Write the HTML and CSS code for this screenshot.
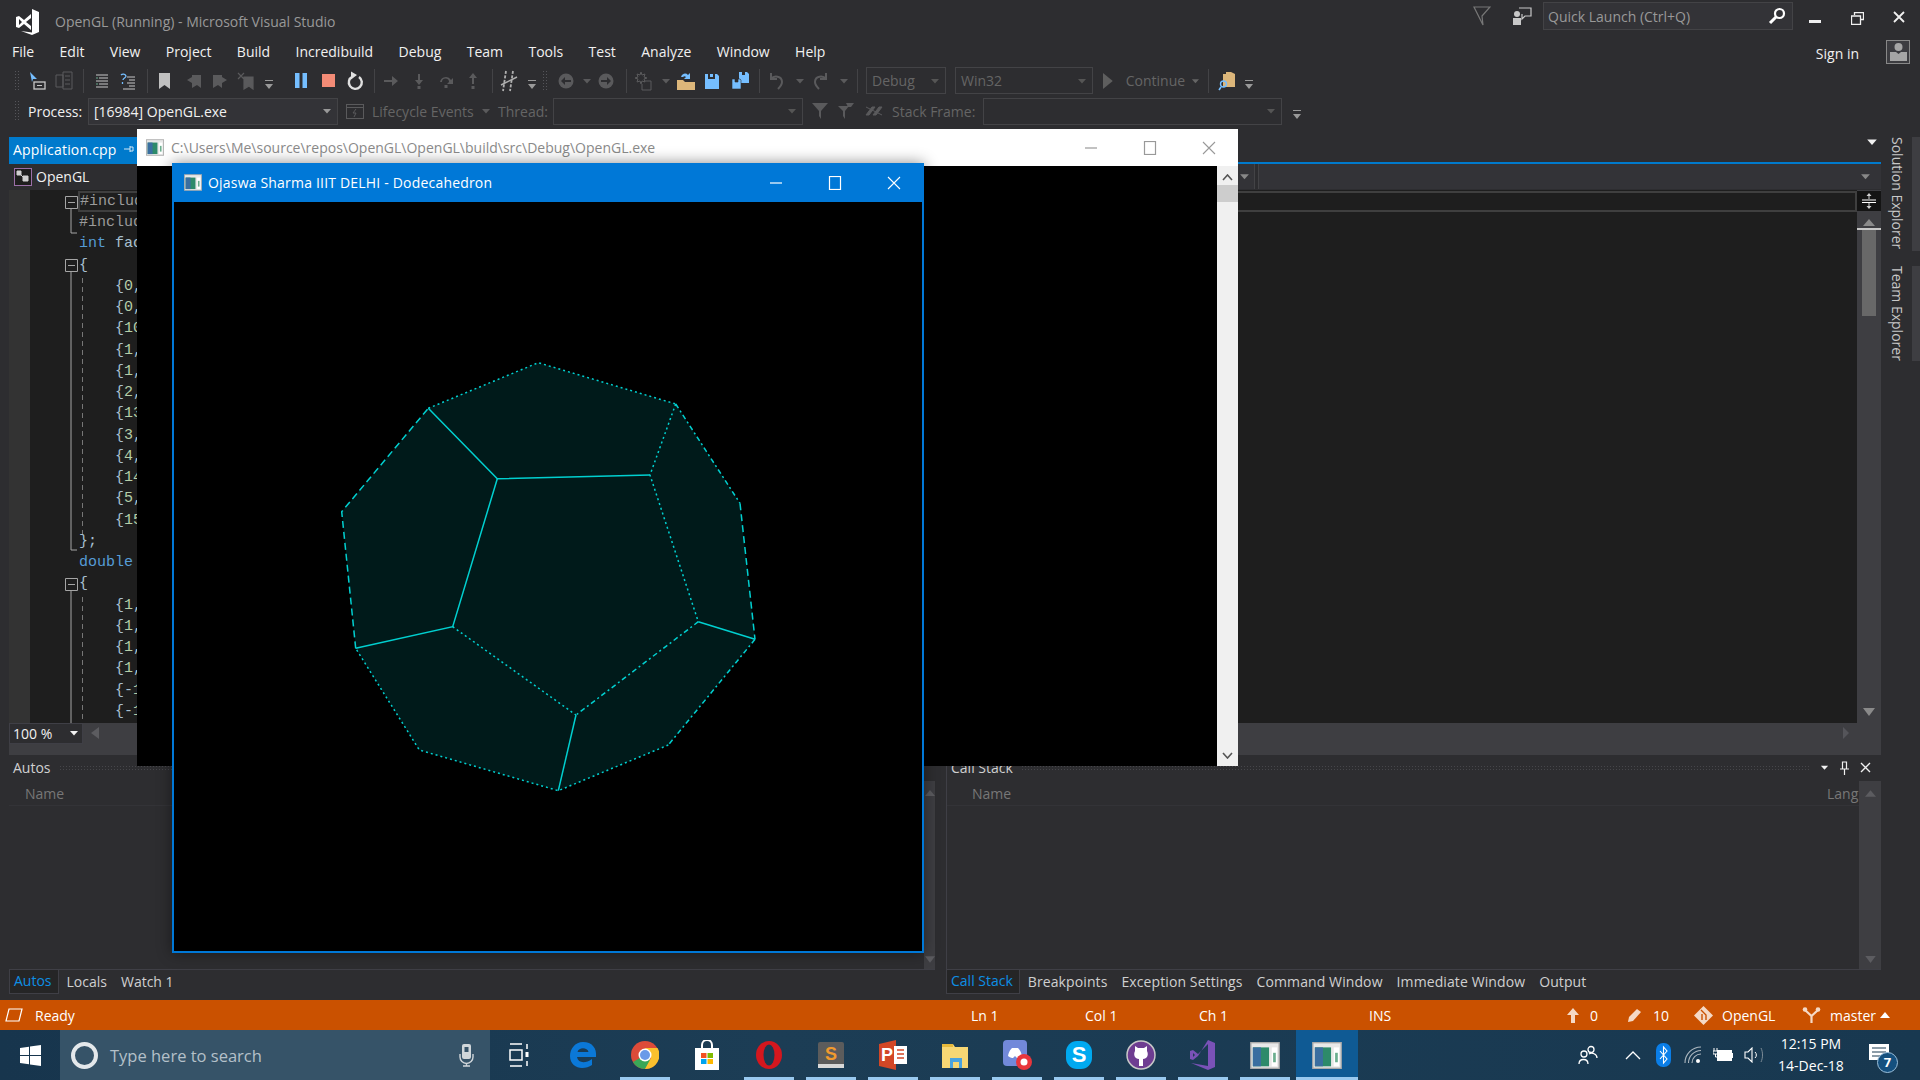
FILE: index.html
```html
<!DOCTYPE html>
<html lang="en">
<head>
    <meta charset="UTF-8">
    <title>OpenGL (Running) - Microsoft Visual Studio</title>
    <link rel="stylesheet" href="styles.css">
</head>
<body>
    <svg class="defs" width="0" height="0">
        <symbol id="i-caret" viewBox="0 0 10 10"><path d="M1 3h8L5 7.5z" fill="currentColor"/></symbol>
        <symbol id="i-over" viewBox="0 0 12 14"><path d="M2 3h8v1H2zM2 7h8l-4 5z" fill="currentColor"/></symbol>
        <symbol id="i-bm" viewBox="0 0 18 18"><path d="M4 1h11v16l-5.500-4L4 17z" fill="currentColor"/></symbol>
        <symbol id="i-step" viewBox="0 0 18 18"><path d="M2 8h8V4l6 5-6 5v-4H2z" fill="currentColor"/></symbol>
        <symbol id="i-down" viewBox="0 0 18 18"><path d="M8 2h2v6h3l-4 5-4-5h3zM7.500 14h3v3h-3z" fill="currentColor"/></symbol>
        <symbol id="i-up" viewBox="0 0 18 18"><path d="M9 1l4 5h-3v6H8V6H5zM7.500 14h3v3h-3z" fill="currentColor"/></symbol>
        <symbol id="i-over-step" viewBox="0 0 18 18"><path d="M3 10a6 6 0 0 1 11-2l2-2v6h-6l2-2a3.500 3.500 0 0 0-7 0zM7.500 13h3v3h-3z" fill="currentColor"/></symbol>
        <symbol id="i-nav" viewBox="0 0 18 18"><circle cx="9" cy="9" r="7.500" fill="currentColor"/><path d="M4 9l4-4v3h6v2H8v3z" fill="#2d2d30"/></symbol>
        <symbol id="i-nav-f" viewBox="0 0 18 18"><circle cx="9" cy="9" r="7.500" fill="currentColor"/><path d="M14 9l-4-4v3H4v2h6v3z" fill="#2d2d30"/></symbol>
        <symbol id="i-appwin" viewBox="0 0 22 20"><rect x=".5" y=".5" width="21" height="19" fill="#e8e8e8" stroke="#aaa"/><rect x="2" y="4" width="12" height="14" fill="#2d8a6a"/><rect x="2" y="4" width="6" height="14" fill="#3a6ea0"/><rect x="16" y="4" width="4" height="14" fill="#fff"/><rect x="17" y="8" width="2" height="7" fill="#6cae8f"/></symbol>
        <symbol id="i-min" viewBox="0 0 14 14"><path d="M1 7h12" stroke="currentColor" stroke-width="1.200"/></symbol>
        <symbol id="i-max" viewBox="0 0 14 14"><rect x="1.500" y=".5" width="11" height="13" fill="none" stroke="currentColor" stroke-width="1.200"/></symbol>
        <symbol id="i-close" viewBox="0 0 14 14"><path d="M1 1l12 12M13 1L1 13" stroke="currentColor" stroke-width="1.100"/></symbol>
    </svg>

    <header class="titlebar">
        <svg class="vs-logo" width="28" height="30" viewBox="0 0 28 30"><path d="M19 2l7 3v20l-7 3-11-4 11 1.500zM3 10l3-1 5 4 7-6v16l-7-6-5 4-3-1zM6 12v6l3-3zM18 11l-5 4 5 4z" fill="#fff" fill-rule="evenodd"/></svg>
        <span class="app-title">OpenGL (Running) - Microsoft Visual Studio</span>
        <div class="title-right">
            <svg class="ic-filter" width="18" height="20" viewBox="0 0 18 20"><path d="M1 1h16L9 10l1 9z" fill="none" stroke="#777" stroke-width="1.200"/></svg>
            <svg class="ic-feedback" width="20" height="20" viewBox="0 0 20 20"><circle cx="5" cy="8" r="3" fill="#c8c8c8"/><path d="M1 12h8v7H1z" fill="#c8c8c8"/><path d="M7 2h12v8h-6l-3 3V8" fill="none" stroke="#c8c8c8" stroke-width="1.200"/></svg>
            <div class="quick-launch">
                <span>Quick Launch (Ctrl+Q)</span>
                <svg width="18" height="18" viewBox="0 0 18 18"><circle cx="11.500" cy="6.500" r="4.500" fill="none" stroke="#fff" stroke-width="2.200"/><path d="M8 10l-6 6" stroke="#fff" stroke-width="3"/></svg>
            </div>
            <svg class="ctl-min" width="12" height="4" viewBox="0 0 12 4"><rect width="12" height="3" fill="#f0f0f0"/></svg>
            <svg class="ctl-restore" width="13" height="13" viewBox="0 0 13 13"><path d="M3.500 3V.5h9v7H10M.5 4h9v8.500h-9z" fill="none" stroke="#f0f0f0" stroke-width="1.300"/></svg>
            <svg class="ctl-close" width="12" height="12" viewBox="0 0 12 12"><path d="M1 1l10 10M11 1L1 11" stroke="#f0f0f0" stroke-width="1.800"/></svg>
        </div>
    </header>

    <nav class="menubar">
        <span>File</span><span>Edit</span><span>View</span><span>Project</span><span>Build</span><span>Incredibuild</span><span>Debug</span><span>Team</span><span>Tools</span><span>Test</span><span>Analyze</span><span>Window</span><span>Help</span>
        <div class="account">
            <span class="sign-in">Sign in</span>
            <div class="avatar"><svg width="19" height="19" viewBox="0 0 19 19"><circle cx="9.500" cy="5" r="4" fill="#a5a5a5"/><path d="M1 10h6l2.500 2 2.500-2h6v9H1z" fill="#a5a5a5"/></svg></div>
        </div>
    </nav>

    <div class="toolbar tb-main">
        <i class="grip"></i>
        <span class="tb ml5 on"><svg width="18" height="20" viewBox="0 0 18 20"><path d="M1 1l7 7H4l-1 3z" fill="#75beff"/><rect x="5" y="11" width="11" height="7" fill="none" stroke="#c8c8c8" stroke-width="1.300"/><path d="M8 14.500h5" stroke="#c8c8c8"/></svg></span>
        <span class="tb off"><svg width="18" height="20" viewBox="0 0 18 20"><path d="M1 4h7v12H1zM8 1h9v17H8z" fill="none" stroke="currentColor"/><path d="M10 5h5M10 9h5M10 13h5" stroke="currentColor"/></svg></span>
        <i class="sep ml6"></i>
        <span class="tb ml5 on"><svg width="16" height="14" viewBox="0 0 16 14"><path d="M2 1h12M5 4h9M2 7h12M5 10h9M2 13h12" stroke="#c8c8c8"/><path d="M2 4h2M2 10h2" stroke="#6cae8f"/></svg></span>
        <span class="tb on"><svg width="18" height="18" viewBox="0 0 18 18"><path d="M2 3a3 3 0 0 1 5 1c0 2-3 2-3 4M3.500 10v2" fill="none" stroke="#75beff" stroke-width="1.300"/><path d="M8 5h8M10 8h6M8 11h8M10 14h6M4 17h12" stroke="#c8c8c8"/></svg></span>
        <i class="sep ml6"></i>
        <span class="tb ml3 lit"><svg width="18" height="18"><use href="#i-bm"/></svg></span>
        <span class="tb ml4 off"><svg width="18" height="18" viewBox="0 0 18 18"><path d="M7 3h9v13l-4-3-5 3zM7 5L2 8l5 3" fill="currentColor"/></svg></span>
        <span class="tb off"><svg width="18" height="18" viewBox="0 0 18 18"><path d="M2 3h9v13l-4-3-5 3zM11 5l5 3-5 3" fill="currentColor"/></svg></span>
        <span class="tb off"><svg width="18" height="18" viewBox="0 0 18 18"><path d="M7 5h9v12l-4-3-5 3zM1 1l6 6M7 1L1 7" fill="currentColor" stroke="currentColor" stroke-width="1.200"/></svg></span>
        <span class="over ml4"><svg width="12" height="14"><use href="#i-over"/></svg></span>
        <span class="tb ml13"><svg width="12" height="15" viewBox="0 0 12 15"><path d="M0 0h4.500v15H0zM7.500 0H12v15H7.500z" fill="#75beff"/></svg></span>
        <span class="tb ml1"><svg width="13" height="13" viewBox="0 0 13 13"><rect width="13" height="13" fill="#f38b76"/></svg></span>
        <span class="tb ml1 lit"><svg width="18" height="20" viewBox="0 0 18 20"><path d="M6.500 5.500A6.500 6.500 0 1 0 13 6" fill="none" stroke="#e0e0e0" stroke-width="2.400"/><path d="M5 .5v8l6-4.500z" fill="#e0e0e0"/></svg></span>
        <i class="sep ml6"></i>
        <span class="tb ml3 off"><svg width="18" height="18"><use href="#i-step"/></svg></span>
        <span class="tb ml2 off"><svg width="18" height="18"><use href="#i-down"/></svg></span>
        <span class="tb ml1 off"><svg width="18" height="18"><use href="#i-over-step"/></svg></span>
        <span class="tb ml1 off"><svg width="18" height="18"><use href="#i-up"/></svg></span>
        <i class="sep ml6"></i>
        <span class="tb ml3"><svg width="18" height="22" viewBox="0 0 18 22"><path d="M6 1L3 21M13 1l-3 20" fill="none" stroke="#b0b0b0" stroke-width="1.800" stroke-dasharray="3 1.500"/><path d="M1 15L17 7" stroke="#b0b0b0" stroke-width="1.500"/></svg></span>
        <span class="over ml4"><svg width="12" height="14"><use href="#i-over"/></svg></span>
        <i class="grip ml4"></i>
        <span class="tb ml5 off"><svg width="18" height="18"><use href="#i-nav"/></svg></span>
        <span class="caret ml2 off"><svg width="10" height="10"><use href="#i-caret"/></svg></span>
        <span class="tb off"><svg width="18" height="18"><use href="#i-nav-f"/></svg></span>
        <i class="sep ml7"></i>
        <span class="tb ml4 off"><svg width="18" height="20" viewBox="0 0 18 20"><path d="M6 1l1 3 3-1-1 3 3 1-3 1 1 3-3-1-1 3-1-3-3 1 1-3-3-1 3-1-1-3 3 1z" fill="none" stroke="currentColor"/><path d="M9 10h7v9H7v-6" fill="none" stroke="currentColor"/></svg></span>
        <span class="caret ml3 off"><svg width="10" height="10"><use href="#i-caret"/></svg></span>
        <span class="tb ml1"><svg width="20" height="20" viewBox="0 0 20 20"><path d="M1 9h6l2 2h10v8H1z" fill="#dcb67a"/><path d="M5 6a4 4 0 0 1 7-2l2-2v6H8l2-2a2 2 0 0 0-3 0z" fill="#75beff"/></svg></span>
        <span class="tb"><svg width="16" height="18" viewBox="0 0 16 18"><path d="M1 2h3v5h7V2h2l2 2v13H1z" fill="#75beff"/><rect x="6" y="2" width="3" height="3" fill="#75beff"/></svg></span>
        <span class="tb ml2"><svg width="19" height="19" viewBox="0 0 19 19"><path d="M8 1h3v3h3V1h2l2 2v9H8z" fill="#75beff"/><path d="M1 8h3v3h3V8h2l1 1v9H1z" fill="#75beff" stroke="#2d2d30" stroke-width=".6"/></svg></span>
        <i class="sep ml6"></i>
        <span class="tb ml4 off"><svg width="16" height="18" viewBox="0 0 16 18"><path d="M2 1v6h6M2 7c3-4 11-3 11 3 0 3-2 5-4 7" fill="none" stroke="currentColor" stroke-width="2"/></svg></span>
        <span class="caret ml4 off"><svg width="10" height="10"><use href="#i-caret"/></svg></span>
        <span class="tb ml1 off"><svg width="16" height="18" viewBox="0 0 16 18"><path d="M14 1v6H8M14 7C11 3 3 4 3 10c0 3 2 5 4 7" fill="none" stroke="currentColor" stroke-width="2"/></svg></span>
        <span class="caret ml5 off"><svg width="10" height="10"><use href="#i-caret"/></svg></span>
        <i class="sep ml7"></i>
        <div class="combo dim w-debug ml8"><span>Debug</span><svg width="10" height="10"><use href="#i-caret"/></svg></div>
        <div class="combo dim w-win ml9"><span>Win32</span><svg width="10" height="10"><use href="#i-caret"/></svg></div>
        <div class="continue ml4">
            <svg width="11" height="18" viewBox="0 0 11 18"><path d="M0 0l11 9-11 9z" fill="#5e5e5e"/></svg>
            <span>Continue</span>
            <svg width="10" height="10"><use href="#i-caret"/></svg>
        </div>
        <i class="sep ml8"></i>
        <span class="tb ml5"><svg width="18" height="20" viewBox="0 0 18 20"><path d="M5 3h3V1h5l4 2v13H5z" fill="#dcb67a"/><circle cx="5.500" cy="13" r="3" fill="none" stroke="#75beff" stroke-width="1.400"/><path d="M3 16l-2 3" stroke="#75beff" stroke-width="1.600"/></svg></span>
        <span class="over ml3"><svg width="12" height="14"><use href="#i-over"/></svg></span>
    </div>

    <div class="toolbar tb-debug">
        <i class="grip"></i>
        <span class="tb-label w-process ml8">Process:</span>
        <div class="combo w-procbox"><span>[16984] OpenGL.exe</span><svg width="10" height="10"><use href="#i-caret"/></svg></div>
        <span class="tb-18 ml8 off"><svg width="18" height="18" viewBox="0 0 18 18"><rect x=".5" y="2.500" width="17" height="14" fill="none" stroke="currentColor"/><path d="M.5 5.500h17M10 7L7 11h3l-2 4" fill="none" stroke="currentColor"/></svg></span>
        <span class="tb-label dim-text w-life ml8">Lifecycle Events</span>
        <span class="caret ml4 off"><svg width="10" height="10"><use href="#i-caret"/></svg></span>
        <span class="tb-label dim-text w-thread ml6">Thread:</span>
        <div class="combo empty w-thbox"><svg width="10" height="10"><use href="#i-caret"/></svg></div>
        <span class="tb-18 ml8 off"><svg width="18" height="18" viewBox="0 0 18 18"><path d="M1 1h16L10 9v8L8 14V9z" fill="currentColor"/></svg></span>
        <span class="tb-18 ml8 off"><svg width="18" height="18" viewBox="0 0 18 18"><path d="M1 4h11L8 9v8L6 14V9zM9 1h8l-3 4h-3z" fill="currentColor"/></svg></span>
        <span class="tb-18 ml10 off"><svg width="18" height="18" viewBox="0 0 18 18"><path d="M1 13l6-8h3l-6 8zM8 13l6-8h3l-6 8zM1 5l16 8" fill="currentColor" stroke="currentColor"/></svg></span>
        <span class="tb-label dim-text w-stack ml9">Stack Frame:</span>
        <div class="combo empty w-stbox"><svg width="10" height="10"><use href="#i-caret"/></svg></div>
        <span class="over ml9"><svg width="12" height="14"><use href="#i-over"/></svg></span>
    </div>

    <main class="workspace">
        <div class="center">
            <div class="tabwell">
                <div class="doc-tab"><span>Application.cpp</span><svg width="10" height="10" viewBox="0 0 10 10"><path d="M0 5h6M6 2v6M6 3h3v4H6" fill="none" stroke="#cfe6f5"/></svg></div>
                <svg class="well-caret" width="12" height="12"><use href="#i-caret"/></svg>
            </div>
            <div class="navbar">
                <div class="nav-left">
                    <svg width="18" height="18" viewBox="0 0 18 18"><rect x=".5" y=".5" width="17" height="17" fill="#1e1e1e" stroke="#9b6fa8"/><path d="M3 3h4v4H3zM9 8h5v5H9zM6 6l4 4" fill="#d0d0d0" stroke="#d0d0d0"/></svg>
                    <span>OpenGL</span>
                </div>
                <div class="nav-mid"><svg width="11" height="11"><use href="#i-caret"/></svg></div>
                <div class="nav-last"><svg width="11" height="11"><use href="#i-caret"/></svg></div>
            </div>
            <div class="editor">
                <div class="gutter"></div>
                <div class="code">
                    <svg class="outline" width="60" height="533" viewBox="0 189 60 533">
                        <g fill="none" stroke="#a5a5a5">
                            <path d="M41 208v24h6M41 270v279h6M41 589v133"/>
                            <path d="M35.500 195.500h12v12h-12zM35.500 258.500h12v12h-12zM35.500 577.500h12v12h-12z" fill="#1e1e1e"/>
                            <path d="M38 201.500h7M38 264.500h7M38 583.500h7"/>
                            <path d="M52.500 277v258M52.500 596v126" stroke="#777" stroke-dasharray="5 4"/>
                        </g>
                    </svg>
                    <div class="line current"><span class="pp">#include</span></div>
                    <div class="line"><span class="pp">#include</span></div>
                    <div class="line"><span class="kw">int</span> fac</div>
                    <div class="line">{</div>
                    <div class="line in">{<span class="num">0</span>,</div>
                    <div class="line in">{<span class="num">0</span>,</div>
                    <div class="line in">{<span class="num">10</span></div>
                    <div class="line in">{<span class="num">1</span>,</div>
                    <div class="line in">{<span class="num">1</span>,</div>
                    <div class="line in">{<span class="num">2</span>,</div>
                    <div class="line in">{<span class="num">13</span></div>
                    <div class="line in">{<span class="num">3</span>,</div>
                    <div class="line in">{<span class="num">4</span>,</div>
                    <div class="line in">{<span class="num">14</span></div>
                    <div class="line in">{<span class="num">5</span>,</div>
                    <div class="line in">{<span class="num">15</span></div>
                    <div class="line">};</div>
                    <div class="line"><span class="kw">double</span></div>
                    <div class="line">{</div>
                    <div class="line in">{<span class="num">1</span>,</div>
                    <div class="line in">{<span class="num">1</span>,</div>
                    <div class="line in">{<span class="num">1</span>,</div>
                    <div class="line in">{<span class="num">1</span>,</div>
                    <div class="line in">{-<span class="num">1</span></div>
                    <div class="line in">{-<span class="num">1</span></div>
                </div>
                <div class="vscroll">
                    <div class="split-btn"><svg width="16" height="16" viewBox="0 0 16 16"><path d="M1 7h14M1 9.500h14" stroke="#fff"/><path d="M8 0l2.500 3h-5zM8 16l-2.500-3h5zM7.500 3h1v3h-1zM7.500 10h1v3h-1z" fill="#d0d0d0"/></svg></div>
                    <svg class="arrow-up" width="12" height="7" viewBox="0 0 12 7"><path d="M6 0l6 7H0z" fill="#8a8a8a"/></svg>
                    <div class="thumb-cap"></div>
                    <div class="thumb"></div>
                    <svg class="arrow-down" width="12" height="8" viewBox="0 0 12 8"><path d="M0 0h12L6 8z" fill="#8a8a8a"/></svg>
                </div>
            </div>
            <div class="hbar">
                <div class="zoom-box"><span>100 %</span><svg width="10" height="10"><use href="#i-caret"/></svg></div>
                <svg class="hleft" width="8" height="12" viewBox="0 0 8 12"><path d="M8 0v12L0 6z" fill="#5c5c60"/></svg>
                <svg class="hright" width="6" height="12" viewBox="0 0 6 12"><path d="M0 0v12l6-6z" fill="#55555a"/></svg>
            </div>
            <div class="hsplit"></div>
            <div class="tools">
                <section class="panel panel-left">
                    <div class="panel-body">
                        <div class="panel-head"><span>Autos</span><i class="dots"></i></div>
                        <div class="col-head"><span>Name</span></div>
                    </div>
                    <div class="pscroll">
                        <svg width="10" height="6" viewBox="0 0 12 7"><path d="M6 0l6 7H0z" fill="#5c5c60"/></svg>
                        <svg width="10" height="7" viewBox="0 0 12 8"><path d="M0 0h12L6 8z" fill="#5c5c60"/></svg>
                    </div>
                </section>
                <section class="panel panel-right">
                    <div class="panel-body">
                        <div class="panel-head">
                            <span>Call Stack</span><i class="dots"></i>
                            <svg class="head-ic" width="9" height="9"><use href="#i-caret"/></svg>
                            <svg class="head-ic" width="9" height="14" viewBox="0 0 9 14"><path d="M2.500 1h4v7h-4zM0 8h9M4.500 8v6" fill="none" stroke="#f0f0f0" stroke-width="1.200"/></svg>
                            <svg class="head-ic" width="11" height="11" viewBox="0 0 11 11"><path d="M1 1l9 9M10 1l-9 9" stroke="#f0f0f0" stroke-width="1.400"/></svg>
                        </div>
                        <div class="col-head"><span>Name</span><span class="col-lang">Lang</span></div>
                    </div>
                    <div class="pscroll pscroll-r">
                        <svg width="11" height="7" viewBox="0 0 12 7"><path d="M6 0l6 7H0z" fill="#5c5c60"/></svg>
                        <svg width="11" height="7" viewBox="0 0 12 8"><path d="M0 0h12L6 8z" fill="#5c5c60"/></svg>
                    </div>
                </section>
            </div>
            <div class="tool-tabs">
                <div class="tab-group group-left">
                    <span class="ttab active">Autos</span><span class="ttab">Locals</span><span class="ttab">Watch 1</span>
                </div>
                <div class="tab-group group-right">
                    <span class="ttab active">Call Stack</span><span class="ttab">Breakpoints</span><span class="ttab">Exception Settings</span><span class="ttab">Command Window</span><span class="ttab">Immediate Window</span><span class="ttab">Output</span>
                </div>
            </div>
        </div>
        <aside class="rail">
            <div class="rail-tab rt-solution"><span>Solution Explorer</span><i></i></div>
            <div class="rail-tab rt-team"><span>Team Explorer</span><i></i></div>
        </aside>
    </main>

    <footer class="statusbar">
        <svg class="st-book" width="18" height="14" viewBox="0 0 18 14"><path d="M4 1h13l-3 12H1z" fill="none" stroke="#fff" stroke-width="1.200"/></svg>
        <span class="st-ready">Ready</span>
        <div class="st-right">
            <span class="s-ln">Ln 1</span>
            <span class="s-col">Col 1</span>
            <span class="s-ch">Ch 1</span>
            <span class="s-ins">INS</span>
            <span class="s-ic s-arrow"><svg width="12" height="15" viewBox="0 0 12 15"><path d="M6 0l6 7H8v8H4V7H0z" fill="#f5d9c5"/></svg></span>
            <span class="s-zero">0</span>
            <span class="s-ic s-pen"><svg width="15" height="15" viewBox="0 0 15 15"><path d="M10 1l4 3-8 9-5 1 1-5z" fill="#f5d9c5"/></svg></span>
            <span class="s-ten">10</span>
            <span class="s-ic s-gem"><svg width="19" height="19" viewBox="0 0 19 19"><path d="M9.500 0l9.500 9.500-9.500 9.500L0 9.500z" fill="#f5d9c5"/><path d="M7 4l5 5v5M8 8v6" stroke="#ca5100" stroke-width="1.400" fill="none"/></svg></span>
            <span class="s-repo">OpenGL</span>
            <span class="s-ic s-fork"><svg width="19" height="17" viewBox="0 0 19 17"><path d="M3 3l6.500 6 6.500-6M9.500 9v7" fill="none" stroke="#f5d9c5" stroke-width="2.200"/><circle cx="3" cy="2.500" r="2.300" fill="#f5d9c5"/><circle cx="16" cy="2.500" r="2.300" fill="#f5d9c5"/></svg></span>
            <span class="s-branch">master</span>
            <svg width="10" height="6" viewBox="0 0 10 6"><path d="M5 0l5 6H0z" fill="#fff"/></svg>
        </div>
    </footer>

    <div class="taskbar">
        <div class="start"><svg width="21" height="21" viewBox="0 0 21 21"><path d="M0 3l9-1.300V10H0zM10 1.500L21 0v10H10zM0 11h9v8.300L0 18zM10 11h11v10l-11-1.500z" fill="#fff"/></svg></div>
        <div class="search">
            <span class="cortana"></span>
            <span class="search-text">Type here to search</span>
            <svg class="mic" width="15" height="24" viewBox="0 0 15 24"><rect x="3" y="1" width="9" height="15" rx="2" fill="#d0d6da"/><rect x="5.500" y="4" width="4" height="5" fill="#365368"/><path d="M1 11v3a6 6 0 0 0 13 0v-3M7.500 20v3M4 23h7" fill="none" stroke="#d0d6da" stroke-width="1.400"/></svg>
        </div>
        <div class="task-view"><svg width="20" height="24" viewBox="0 0 20 24"><path d="M1 1h12M1 23h12M1 7h12v10H1z" fill="none" stroke="#fff" stroke-width="1.500"/><path d="M18 1v5M18 18v5" stroke="#fff" stroke-width="1.500"/><rect x="16.500" y="9" width="3" height="5" fill="#fff"/></svg></div>
        <div class="apps">
            <div class="app"><svg width="28" height="28" viewBox="0 0 28 28"><path d="M14 1C6 1 1 8 1 15c0 8 6 12 12 12 4 0 7-1 10-3v-6c-7 5-14 4-15-2h19c1-9-4-15-13-15zM8.500 11c1-5 10-5 11 0z" fill="#0b78d7" fill-rule="evenodd"/></svg></div>
            <div class="app running"><svg width="28" height="28" viewBox="0 0 28 28"><circle cx="14" cy="14" r="14" fill="#dd4b39"/><path d="M14 14L2 21A14 14 0 0 0 14 28l6-9z" fill="#3aa757"/><path d="M14 7h12.500A14 14 0 0 1 14 28l6-11z" fill="#fbc02d"/><circle cx="14" cy="14" r="6.500" fill="#fff"/><circle cx="14" cy="14" r="5" fill="#6a9be8"/></svg></div>
            <div class="app"><svg width="28" height="30" viewBox="0 0 28 30"><path d="M2 8h24v22H2z" fill="#fff"/><path d="M9 8V5a5 5 0 0 1 10 0v3" fill="none" stroke="#fff" stroke-width="2"/><path d="M8 13h5.500v5H8z" fill="#f25022"/><path d="M14.500 13H20v5h-5.500z" fill="#7fba00"/><path d="M8 19h5.500v5H8z" fill="#00a4ef"/><path d="M14.500 19H20v5h-5.500z" fill="#ffb900"/></svg></div>
            <div class="app running"><svg width="28" height="30" viewBox="0 0 28 30"><ellipse cx="14" cy="15" rx="13" ry="14" fill="#d4171e"/><ellipse cx="14" cy="15" rx="5.500" ry="10.500" fill="#1a3a52"/></svg></div>
            <div class="app running"><svg width="28" height="28" viewBox="0 0 28 28"><rect x="1" y="1" width="26" height="24" rx="2" fill="#5c5c5c"/><rect x="1" y="23" width="26" height="4" fill="#d8d8d8"/><text x="14" y="19" class="app-letter" fill="#f09a2e">S</text></svg></div>
            <div class="app running"><svg width="28" height="30" viewBox="0 0 28 30"><path d="M0 4l17-4v30L0 26z" fill="#d24726"/><rect x="15" y="6" width="13" height="18" fill="#fff"/><path d="M18 10h7M18 14h7M18 18h7" stroke="#d24726" stroke-width="1.600"/><text x="8" y="21" class="app-letter" fill="#fff">P</text></svg></div>
            <div class="app running"><svg width="28" height="28" viewBox="0 0 28 28"><path d="M1 3h11l2 3h13v21H1z" fill="#f7d774"/><rect x="1" y="3" width="11" height="3" fill="#e6b93c"/><rect x="9" y="17" width="12" height="10" fill="#4aa3df"/><rect x="12" y="21" width="6" height="6" fill="#f7d774"/></svg></div>
            <div class="app running"><svg width="30" height="32" viewBox="0 0 30 32"><rect x="1" y="1" width="24" height="26" rx="4" fill="#7289da"/><path d="M6 17c1-5 3-7 4-8h6c1 1 3 3 4 8-3 2-4 2-5 2l-2-2-2 2c-1 0-2 0-5-2z" fill="#fff"/><circle cx="22" cy="23" r="8" fill="#e8363c"/><circle cx="22" cy="23" r="3.500" fill="#fff"/></svg></div>
            <div class="app running"><svg width="28" height="30" viewBox="0 0 28 30"><rect x="1" y="1" width="26" height="28" rx="11" fill="#00a9f0"/><text x="14" y="22" class="app-letter big" fill="#fff">S</text></svg></div>
            <div class="app running"><svg width="30" height="32" viewBox="0 0 30 32"><circle cx="15" cy="16" r="14" fill="#6e3d91" stroke="#c8c8c8" stroke-width="1.500"/><path d="M9 7l3 2h6l3-2v5c2 4 0 8-4 8v7h-4v-7c-4 0-6-4-4-8z" fill="#fff"/></svg></div>
            <div class="app running"><svg width="28" height="32" viewBox="0 0 28 32"><path d="M19 1l7 3v24l-7 3L2 24l17 3V5L9 15l-5-4-3 1v8l3 1 5-4" fill="#7a52b8"/><path d="M4 14v4l2-2z" fill="#1a3a52"/></svg></div>
            <div class="app running"><svg width="30" height="27"><use href="#i-appwin"/></svg></div>
            <div class="app running active"><svg width="30" height="27"><use href="#i-appwin"/></svg></div>
        </div>
        <div class="tray">
            <span class="tray-ic"><svg width="20" height="20" viewBox="0 0 20 20"><circle cx="13" cy="4.500" r="3" fill="none" stroke="#fff" stroke-width="1.300"/><circle cx="6" cy="9" r="3" fill="none" stroke="#fff" stroke-width="1.300"/><path d="M1 19c0-6 9-6 9 0M11 9c3-2 8 0 8 4" fill="none" stroke="#fff" stroke-width="1.300"/></svg></span>
            <span class="tray-ic chevron"><svg width="16" height="9" viewBox="0 0 16 9"><path d="M1 8l7-7 7 7" fill="none" stroke="#fff" stroke-width="1.300"/></svg></span>
            <span class="tray-ic"><svg width="15" height="24" viewBox="0 0 15 24"><rect width="15" height="24" rx="7" fill="#0a7ee8"/><path d="M4 8l7 8-3.500 4V4L11 8l-7 8" fill="none" stroke="#fff" stroke-width="1.100"/></svg></span>
            <span class="tray-ic"><svg width="18" height="18" viewBox="0 0 18 18"><path d="M1 17A16 16 0 0 1 17 1M4.500 17A12.500 12.500 0 0 1 17 4.500M8 17a9 9 0 0 1 9-9" fill="none" stroke="#aeb9c1" stroke-width="1.100"/><circle cx="14" cy="15" r="2" fill="#fff"/></svg></span>
            <span class="tray-ic"><svg width="20" height="14" viewBox="0 0 20 14"><rect x="4.500" y="2.500" width="14" height="10" fill="#fff" stroke="#fff"/><rect x="18.500" y="5" width="1.500" height="5" fill="#fff"/><path d="M1 0v3M4 0v3M0 3h5v3H0zM2.500 6v3h2" stroke="#fff" fill="none"/></svg></span>
            <span class="tray-ic"><svg width="19" height="16" viewBox="0 0 19 16"><path d="M1 5h3l4-4v14l-4-4H1z" fill="none" stroke="#fff" stroke-width="1.100"/><path d="M11 5a4 4 0 0 1 0 6" fill="none" stroke="#fff"/><path d="M17 1c2 4 2 10 0 14" fill="none" stroke="#7d8c97"/></svg></span>
            <div class="clock"><span>12:15 PM</span><span>14-Dec-18</span></div>
            <div class="notify">
                <svg width="20" height="20" viewBox="0 0 20 20"><path d="M0 0h20v16H0z" fill="#fff"/><path d="M3 4h14M3 8h14M3 12h10" stroke="#1a3a52" stroke-width="1.200"/></svg>
                <span class="badge">7</span>
            </div>
        </div>
    </div>

    <!-- floating windows -->
    <div class="console">
        <div class="console-title">
            <svg width="18" height="17"><use href="#i-appwin"/></svg>
            <span>C:\Users\Me\source\repos\OpenGL\OpenGL\build\src\Debug\OpenGL.exe</span>
            <div class="winctl">
                <svg width="14" height="14"><use href="#i-min"/></svg>
                <svg width="14" height="14"><use href="#i-max"/></svg>
                <svg width="14" height="14"><use href="#i-close"/></svg>
            </div>
        </div>
        <div class="console-body">
            <div class="console-scroll">
                <svg width="11" height="7" viewBox="0 0 11 7"><path d="M1 6l4.500-5L10 6" fill="none" stroke="#555" stroke-width="1.600"/></svg>
                <div class="console-thumb"></div>
                <svg class="console-down" width="11" height="7" viewBox="0 0 11 7"><path d="M1 1l4.500 5L10 1" fill="none" stroke="#555" stroke-width="1.600"/></svg>
            </div>
        </div>
    </div>

    <div class="glwin">
        <div class="glwin-title">
            <svg width="18" height="17"><use href="#i-appwin"/></svg>
            <span>Ojaswa Sharma IIIT DELHI - Dodecahedron</span>
            <div class="winctl light">
                <svg width="14" height="14"><use href="#i-min"/></svg>
                <svg width="14" height="14"><use href="#i-max"/></svg>
                <svg width="14" height="14"><use href="#i-close"/></svg>
            </div>
        </div>
        <svg class="dodeca" width="748" height="749" viewBox="174 202 748 749">
            <polygon class="face" points="538.300,362.700 675.700,404 740,503.300 755,639.300 668.300,745 558.300,790.700 419.300,750 355.700,648.300 341.700,511.700 428.300,408.300"/>
            <g class="solid">
                <path d="M428.300 408.300L497.300 478.700L650 475"/>
                <path d="M497.300 478.700L452.700 626.700L355.700 648.300"/>
                <path d="M698.300 621.700L755 639.300"/>
                <path d="M576 715L558.300 790.700"/>
            </g>
            <g class="dotted">
                <path d="M428.300 408.300L538.300 362.700L675.700 404"/>
                <path d="M675.700 404L650 475L698.300 621.700"/>
                <path d="M668.300 745L558.300 790.700L419.300 750L355.700 648.300"/>
                <path d="M452.700 626.700L576 715"/>
            </g>
            <g class="dashdot">
                <path d="M675.700 404L740 503.300"/>
                <path d="M698.300 621.700L576 715"/>
                <path d="M755 639.300L668.300 745"/>
            </g>
            <g class="dashed">
                <path d="M740 503.300L755 639.300"/>
                <path d="M355.700 648.300L341.700 511.700L428.300 408.300"/>
            </g>
        </svg>
    </div>
</body>
</html>
```
FILE: styles.css
```css
/* Base */
* {
    box-sizing: border-box;
}

html, body {
    margin: 0;
    height: 100%;
}

body {
    width: 1920px;
    height: 1080px;
    overflow: hidden;
    position: relative;
    display: flex;
    flex-direction: column;
    background-color: #2d2d30;
    color: #f1f1f1;
    font-family: "Open Sans", "Noto Sans", sans-serif;
    font-size: 14px;
}

i {
    display: block;
}

.defs {
    position: absolute;
}

/* margin helpers for toolbar spacing */
.ml1 { margin-left: 1px; }
.ml2 { margin-left: 2px; }
.ml3 { margin-left: 3px; }
.ml4 { margin-left: 4px; }
.ml5 { margin-left: 5px; }
.ml6 { margin-left: 6px; }
.ml7 { margin-left: 7px; }
.ml8 { margin-left: 8px; }
.ml9 { margin-left: 9px; }
.ml10 { margin-left: 10px; }
.ml13 { margin-left: 13px; }

/* Title bar */
.titlebar {
    height: 38px;
    display: flex;
    align-items: flex-start;
    position: relative;
}

.vs-logo {
    margin: 7px 0 0 13px;
}

.app-title {
    margin: 11px 0 0 14px;
    color: #999;
    line-height: 21px;
}

.title-right {
    margin-left: auto;
    display: flex;
    align-items: flex-start;
    width: 447px;
    height: 38px;
    position: relative;
}

.ic-filter {
    margin: 6px 0 0 0;
}

.ic-feedback {
    margin: 6px 0 0 21px;
}

.quick-launch {
    width: 250px;
    height: 28px;
    margin: 2px 0 0 11px;
    padding: 0 6px 0 4px;
    display: flex;
    align-items: center;
    justify-content: space-between;
    background-color: #333337;
    border: 1px solid #434346;
    color: #999;
}

.ctl-min {
    margin: 20px 0 0 16px;
}

.ctl-restore {
    margin: 12px 0 0 30px;
}

.ctl-close {
    margin: 11px 0 0 29px;
}

/* Menu */
.menubar {
    height: 28px;
    padding-left: 12px;
    display: flex;
    align-items: center;
    gap: 25.400px;
    color: #f1f1f1;
}

.account {
    margin-left: auto;
    display: flex;
    align-items: center;
}

.sign-in {
    margin-right: 27px;
    position: relative;
    top: 2px;
}

.avatar {
    width: 24px;
    height: 24px;
    margin-right: 10px;
    display: flex;
    align-items: center;
    justify-content: center;
    border: 1px solid #888;
    background-color: #3c3c40;
}

/* Toolbars */
.toolbar {
    display: flex;
    align-items: center;
    padding-left: 14px;
}

.tb-main {
    height: 30px;
    margin-bottom: 1px;
}

.tb-debug {
    height: 29px;
}

.grip {
    width: 6px;
    height: 22px;
    background-image: radial-gradient(#55555a 1px, transparent 1px);
    background-size: 3px 3px;
}

.sep {
    width: 1px;
    height: 24px;
    background-color: #434346;
}

.tb {
    width: 26px;
    height: 26px;
    flex: none;
    display: flex;
    align-items: center;
    justify-content: center;
}

.tb-18 {
    width: 18px;
    height: 18px;
    flex: none;
    display: flex;
}

.on {
    color: #c8c8c8;
}

.lit {
    color: #c0c0c0;
}

.off {
    color: #5a5a5c;
}

.over {
    width: 12px;
    flex: none;
    display: flex;
    color: #999;
    margin-top: 6px;
}

.caret {
    width: 12px;
    flex: none;
    display: flex;
    justify-content: center;
}

.combo {
    height: 27px;
    flex: none;
    padding: 0 5px;
    display: flex;
    align-items: center;
    justify-content: space-between;
    background-color: #333337;
    border: 1px solid #434346;
    color: #f1f1f1;
}

.combo svg {
    color: #999;
}

.combo.dim,
.combo.empty {
    background-color: transparent;
    color: #656565;
}

.combo.dim svg,
.combo.empty svg {
    color: #555;
}

.combo.empty {
    justify-content: flex-end;
}

.w-debug { width: 80px; }
.w-win { width: 138px; }
.w-procbox { width: 250px; }
.w-thbox { width: 250px; }
.w-stbox { width: 299px; }

.continue {
    width: 103px;
    flex: none;
    display: flex;
    align-items: center;
    padding-left: 6px;
    color: #656565;
    gap: 6px;
}

.continue span {
    margin-left: 7px;
}

.tb-label {
    flex: none;
    color: #f1f1f1;
}

.dim-text {
    color: #656565;
}

.w-process { width: 60px; }
.w-life { width: 104px; }
.w-thread { width: 55px; }
.w-stack { width: 91px; }

/* Workspace */
.workspace {
    height: 875px;
    display: flex;
}

.center {
    width: 1872px;
    margin-left: 9px;
    display: flex;
    flex-direction: column;
    flex: none;
}

.tabwell {
    height: 38px;
    padding-top: 11px;
    display: flex;
    align-items: flex-start;
    border-bottom: 2px solid #007acc;
    position: relative;
}

.doc-tab {
    width: 128px;
    height: 25px;
    padding: 0 3px 0 4px;
    display: flex;
    align-items: center;
    justify-content: space-between;
    background-color: #007acc;
    color: #fff;
    letter-spacing: .2px;
}

.well-caret {
    position: absolute;
    right: 3px;
    top: 10px;
    color: #f1f1f1;
}

.navbar {
    height: 26px;
    display: flex;
    align-items: center;
    background-color: #2d2d30;
}

.nav-left {
    display: flex;
    align-items: center;
    gap: 4px;
    padding-left: 5px;
    width: 920px;
}

.nav-mid {
    width: 326px;
    height: 25px;
    padding-right: 4px;
    display: flex;
    align-items: center;
    justify-content: flex-end;
    background-color: #333337;
    border-right: 1px solid #434346;
    color: #888;
}

.nav-last {
    flex: 1;
    height: 25px;
    margin-left: 3px;
    padding-right: 10px;
    display: flex;
    align-items: center;
    justify-content: flex-end;
    background-color: #333337;
    border-left: 1px solid #434346;
    color: #888;
}

.editor {
    height: 533px;
    display: flex;
    background-color: #1e1e1e;
}

.gutter {
    width: 21px;
    background-color: #333333;
}

.code {
    flex: 1;
    position: relative;
    padding-top: 1px;
    font-family: "Liberation Mono", monospace;
    font-size: 15px;
    color: #a8c0d0;
    overflow: hidden;
}

.outline {
    position: absolute;
    left: 0;
    top: 0;
}

.line {
    height: 21.250px;
    line-height: 21.250px;
    padding-left: 49px;
    position: relative;
    white-space: pre;
}

.line.in {
    padding-left: 85px;
}

.line.current {
    border: 2px solid #3f3f3f;
    margin-left: 48px;
    padding-left: 0;
    line-height: 17.250px;
}

.pp { color: #9b9b9b; }
.kw { color: #569cd6; }
.num { color: #b5cea8; }

.vscroll {
    width: 24px;
    position: relative;
    background-color: #3e3e42;
    display: flex;
    flex-direction: column;
    align-items: center;
}

.split-btn {
    width: 24px;
    height: 20px;
    margin-top: 1px;
    display: flex;
    align-items: center;
    justify-content: center;
    background-color: #141414;
}

.arrow-up {
    margin-top: 8px;
}

.thumb-cap {
    width: 24px;
    height: 2px;
    margin-top: 2px;
    background-color: #c8c8c8;
}

.thumb {
    width: 14px;
    height: 86px;
    background-color: #686868;
}

.arrow-down {
    position: absolute;
    bottom: 7px;
}

.hbar {
    height: 21px;
    display: flex;
    align-items: center;
    background-color: #3e3e42;
    position: relative;
}

.zoom-box {
    width: 74px;
    height: 21px;
    padding: 0 3px;
    display: flex;
    align-items: center;
    justify-content: space-between;
    background-color: #2d2d30;
    border: 1px solid #3f3f46;
}

.hleft {
    margin-left: 8px;
}

.hright {
    margin-left: auto;
    margin-right: 32px;
}

.hsplit {
    height: 11px;
    background-color: #3e3e42;
}

/* Tool windows */
.tools {
    height: 214px;
    display: flex;
}

.panel {
    display: flex;
    height: 214px;
}

.panel-left {
    width: 926px;
}

.panel-right {
    width: 935px;
    margin-left: 11px;
    border-left: 1px solid #3f3f46;
}

.panel-body {
    flex: 1;
    min-width: 0;
}

.panel-head {
    height: 26px;
    display: flex;
    align-items: center;
    padding: 0 4px;
    gap: 8px;
    color: #d0d0d0;
}

.panel-right .panel-head {
    margin-right: -22px;
    padding-right: 10px;
    position: relative;
}

.dots {
    flex: 1;
    height: 6px;
    background-image: radial-gradient(#46464a 1px, transparent 1px);
    background-size: 3px 3px;
}

.head-ic {
    flex: none;
    margin-left: 3px;
    color: #f1f1f1;
}

.col-head {
    height: 25px;
    display: flex;
    justify-content: space-between;
    align-items: center;
    padding: 1px 0 0 16px;
    color: #777;
    border-bottom: 1px solid #333337;
}

.panel-right .col-head {
    padding-left: 25px;
}

.col-lang {
    width: 32px;
    overflow: hidden;
}

.pscroll {
    width: 11px;
    margin-top: 26px;
    padding: 9px 0 6px;
    display: flex;
    flex-direction: column;
    align-items: center;
    justify-content: space-between;
    background-color: #3e3e42;
}

.pscroll-r {
    width: 22px;
}

.tool-tabs {
    height: 25px;
    display: flex;
}

.tab-group {
    display: flex;
    border-top: 1px solid #3f3f46;
}

.group-left {
    width: 926px;
    margin-right: 11px;
}

.group-right {
    flex: 1;
}

.group-right .ttab {
    letter-spacing: .1px;
}

.ttab {
    padding: 0 7px;
    line-height: 24px;
    color: #d0d0d0;
}

.ttab.active {
    color: #0e8fe4;
    background-color: #252526;
    border: 1px solid #3f3f46;
    border-top: 0;
    line-height: 22px;
    height: 24px;
    margin-right: 1px;
    padding: 0 6px 0 4px;
    letter-spacing: 0;
}

/* Right rail */
.rail {
    flex: 1;
    padding-top: 11px;
    display: flex;
    flex-direction: column;
}

.rail-tab {
    display: flex;
    justify-content: flex-end;
    position: relative;
}

.rail-tab span {
    writing-mode: vertical-rl;
    color: #c8c8c8;
    line-height: 16px;
    margin-right: 7px;
}

.rail-tab i {
    width: 8px;
    background-color: #3e3e42;
}

.rt-solution {
    height: 114px;
    margin-bottom: 15px;
}

.rt-team {
    height: 95px;
}

/* Status bar */
.statusbar {
    height: 30px;
    display: flex;
    align-items: center;
    background-color: #ca5100;
    color: #fff;
}

.st-book {
    margin-left: 5px;
}

.st-ready {
    margin-left: 12px;
}

.st-right {
    margin-left: auto;
    width: 949px;
    display: flex;
    align-items: center;
}

.st-right span {
    flex: none;
}

.s-ic {
    display: flex;
}

.s-ln { width: 114px; }
.s-col { width: 114px; }
.s-ch { width: 170px; }
.s-ins { width: 196px; }
.s-arrow { width: 25px; padding-left: 2px; }
.s-zero { width: 37px; }
.s-pen { width: 26px; }
.s-ten { width: 41px; }
.s-gem { width: 28px; }
.s-repo { width: 80px; }
.s-fork { width: 28px; }
.s-branch { width: 47px; margin-right: 3px; }

/* Taskbar */
.taskbar {
    height: 50px;
    display: flex;
    background: linear-gradient(90deg, #17354d, #1c3d55 40%, #183850);
}

.start {
    width: 60px;
    display: flex;
    align-items: center;
    justify-content: center;
}

.search {
    width: 430px;
    padding: 0 16px 0 11px;
    display: flex;
    align-items: center;
    background-color: #365368;
    color: #b4c0c9;
    font-size: 16.500px;
}

.cortana {
    width: 27px;
    height: 27px;
    border: 4px solid #e4e8eb;
    border-radius: 50%;
}

.search-text {
    margin-left: 12px;
}

.mic {
    margin-left: auto;
}

.task-view {
    width: 58px;
    display: flex;
    align-items: center;
    justify-content: center;
}

.apps {
    margin-left: 4px;
    display: flex;
}

.app {
    width: 62px;
    height: 50px;
    display: flex;
    align-items: center;
    justify-content: center;
    position: relative;
}

.app.running::after {
    content: "";
    position: absolute;
    left: 6px;
    right: 6px;
    bottom: 0;
    height: 3px;
    background-color: #99c9ef;
}

.app.active {
    background-color: #0f5a94;
}

.app.active::after {
    left: 0;
    right: 0;
}

.app-letter {
    font-family: "Liberation Sans", sans-serif;
    font-weight: 700;
    font-size: 18px;
    text-anchor: middle;
}

.app-letter.big {
    font-size: 22px;
}

.tray {
    margin-left: auto;
    display: flex;
    align-items: center;
}

.tray-ic {
    width: 30px;
    display: flex;
    justify-content: center;
}

.chevron {
    margin-left: 15px;
}

.clock {
    width: 84px;
    margin-left: 1px;
    display: flex;
    flex-direction: column;
    align-items: center;
    font-size: 14px;
    line-height: 22px;
    color: #fff;
}

.notify {
    width: 67px;
    height: 50px;
    padding: 14px 0 0 16px;
    position: relative;
}

.badge {
    position: absolute;
    left: 24px;
    top: 22px;
    width: 21px;
    height: 21px;
    border-radius: 50%;
    background-color: #14507f;
    border: 1px solid #9cc0dc;
    color: #fff;
    font-size: 13px;
    font-weight: 700;
    line-height: 19px;
    text-align: center;
}

/* Console window */
.console {
    position: absolute;
    left: 137px;
    top: 129px;
    width: 1101px;
    height: 637px;
    display: flex;
    flex-direction: column;
    background-color: #000;
}

.console-title {
    height: 37px;
    flex: none;
    padding: 0 8px 0 9px;
    display: flex;
    align-items: center;
    gap: 7px;
    background-color: #fff;
    color: #8a8a8a;
    font-size: 14px;
}

.winctl {
    margin-left: auto;
    display: flex;
    gap: 45px;
    color: #999;
}

.console-title .winctl {
    margin-right: 14px;
}

.console-body {
    flex: 1;
    display: flex;
    justify-content: flex-end;
}

.console-scroll {
    width: 21px;
    padding-top: 8px;
    display: flex;
    flex-direction: column;
    align-items: center;
    background-color: #f0f0f0;
}

.console-thumb {
    width: 21px;
    height: 17px;
    margin-top: 4px;
    background-color: #cdcdcd;
}

.console-down {
    margin-top: auto;
    margin-bottom: 7px;
}

/* OpenGL window */
.glwin {
    position: absolute;
    left: 172px;
    top: 163px;
    width: 752px;
    height: 790px;
    border: 2px solid #0078d7;
    border-top: 0;
    background-color: #000;
    box-shadow: 0 0 14px rgba(0, 0, 0, 0.45);
}

.glwin-title {
    height: 39px;
    margin: 0 -2px;
    padding: 0 23px 0 12px;
    display: flex;
    align-items: center;
    gap: 6px;
    background-color: #0078d7;
    color: #fff;
    font-size: 14px;
    letter-spacing: .19px;
}

.winctl.light {
    color: #fff;
}

.dodeca {
    display: block;
}

.face {
    fill: #001a1a;
}

.solid path,
.dotted path,
.dashdot path,
.dashed path {
    fill: none;
    stroke: #00d0d0;
    stroke-width: 1.500px;
}

.dotted path {
    stroke-dasharray: 2 3;
}

.dashdot path {
    stroke-dasharray: 5 3 2 3;
}

.dashed path {
    stroke-dasharray: 7 4;
}
```
